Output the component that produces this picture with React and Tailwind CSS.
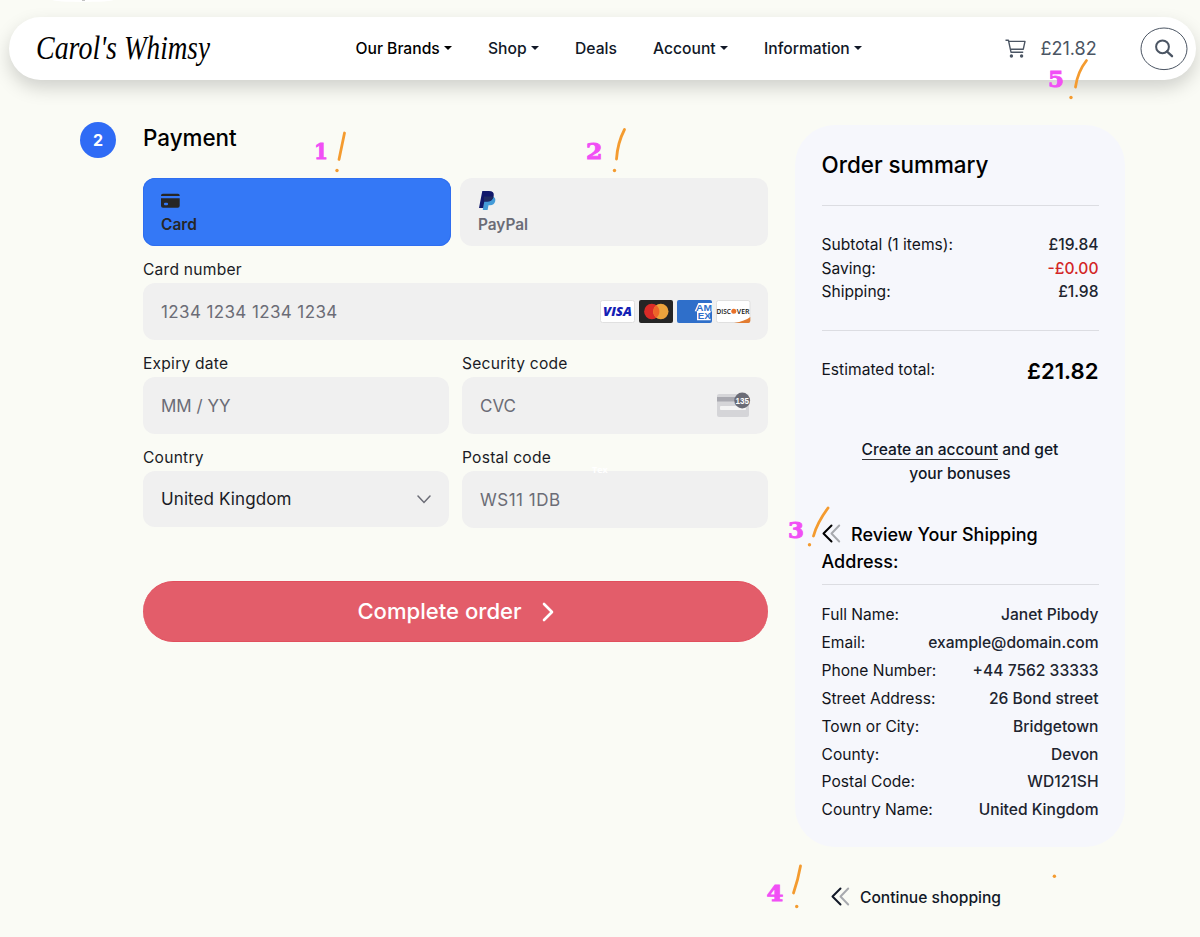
import React from "react";

const NAV = [
  { label: "Our Brands", caret: true, cls: "w-[132.5px] text-black" },
  { label: "Shop", caret: true, cls: "w-[87px] text-[#111827]" },
  { label: "Deals", caret: false, cls: "w-[78px] text-[#111827]" },
  { label: "Account", caret: true, cls: "w-[111px] text-[#111827]" },
  { label: "Information", caret: true, cls: "w-[110px] text-[#111827]" },
];

const TOTALS = [
  ["Subtotal (1 items):", "£19.84", "text-[#20242f]"],
  ["Saving:", "-£0.00", "text-[#d32626]"],
  ["Shipping:", "£1.98", "text-[#20242f]"],
];

const ADDRESS = [
  ["Full Name:", "Janet Pibody"],
  ["Email:", "example@domain.com"],
  ["Phone Number:", "+44 7562 33333"],
  ["Street Address:", "26 Bond street"],
  ["Town or City:", "Bridgetown"],
  ["County:", "Devon"],
  ["Postal Code:", "WD121SH"],
  ["Country Name:", "United Kingdom"],
];

function Header() {
  return (
    <header className="ml-[9px] mt-[17px] flex h-[63px] w-[1187px] items-center rounded-[32px] bg-white shadow-[0_8px_18px_rgba(0,0,0,0.17)]">
      <div className="ml-[27px] w-[319.5px]">
        <svg width="178" height="48" viewBox="0 0 178 48" className="block overflow-visible">
          <g className="fill-black font-['Liberation_Serif',serif] text-[34px] italic">
            <text x="0" y="34" textLength="81" lengthAdjust="spacingAndGlyphs">Carol's</text>
            <text x="88" y="34" textLength="86" lengthAdjust="spacingAndGlyphs">Whimsy</text>
          </g>
        </svg>
      </div>
      <nav className="flex w-[649px] items-center text-[15.65px] font-medium">
        {NAV.map((n) => (
          <a key={n.label} className={"flex shrink-0 items-center whitespace-nowrap " + n.cls}>
            {n.label}
            {n.caret && <span className="ml-1 mt-[-1px] border-x-[4.5px] border-t-[4.5px] border-x-transparent border-t-current" />}
          </a>
        ))}
      </nav>
      <svg width="21" height="20" viewBox="0 0 21 20" fill="none" className="shrink-0 stroke-[#4b5563]" strokeWidth="1.4">
        <path d="M.5 1.2H3.4L6 13.2H18.2M3.8 2.4H20L18.3 10.2H5.5" strokeLinejoin="round" />
        <circle cx="6.4" cy="17" r="1" className="fill-[#4b5563]" />
        <circle cx="16.6" cy="17" r="1" className="fill-[#4b5563]" />
      </svg>
      <span className="ml-[15px] w-[99px] shrink-0 text-[18px] text-[#4b5563]">£21.82</span>
      <svg width="48" height="44" viewBox="0 0 48 44" fill="none" className="shrink-0 stroke-[#4b5563]">
        <ellipse cx="24" cy="21.8" rx="23" ry="20.8" strokeWidth="1" />
        <circle cx="22.5" cy="19.8" r="6.4" strokeWidth="2" />
        <path d="M27 24.5L32 29.2" strokeWidth="2.4" strokeLinecap="round" />
      </svg>
    </header>
  );
}

function CardLogos() {
  return (
    <svg width="151" height="24" viewBox="0 0 151 24" className="relative left-px block">
      <rect x=".5" y=".5" width="34" height="22" rx="2" fill="#fff" stroke="#e0e0e0" />
      <text x="3" y="16.3" textLength="29" lengthAdjust="spacingAndGlyphs" className="fill-[#1420b4] font-['Open_Sans',sans-serif] text-[12.5px] font-extrabold italic">VISA</text>
      <rect x="39" width="34" height="23" rx="2" fill="#252525" />
      <circle cx="51.8" cy="11.5" r="7.7" fill="#d92b27" />
      <circle cx="60.8" cy="11.5" r="7.7" fill="#eba33c" />
      <path d="M56.3 5.3a7.7 7.7 0 0 1 0 12.4a7.7 7.7 0 0 1 0-12.4Z" fill="#ee6528" />
      <svg x="77" width="35" height="23" viewBox="0 0 35 23">
        <rect width="35" height="23" rx="2" fill="#2f6fca" />
        <path d="M21.3 3H35V11.2H17.7Z" fill="#fff" />
        <path d="M20 11H33.8L32.5 15.6L33.8 20.2H20Z" fill="#fff" />
        <g className="fill-[#2f6fca] font-['Liberation_Sans',sans-serif] text-[9px] font-bold">
          <text x="19" y="10.7" textLength="16" lengthAdjust="spacingAndGlyphs">AM</text>
          <text x="20.7" y="19.3" textLength="13" lengthAdjust="spacingAndGlyphs">EX</text>
        </g>
      </svg>
      <rect x="116.5" y=".5" width="33.5" height="22" rx="2" fill="#fff" stroke="#e0e0e0" />
      <path d="M134 23Q145 21 150.3 17V21a2 2 0 0 1-2 2Z" fill="#e27c31" />
      <text x="116.5" y="13.6" textLength="14.5" lengthAdjust="spacingAndGlyphs" className="fill-[#111] font-['Open_Sans',sans-serif] text-[6.5px] font-semibold">DISC</text>
      <circle cx="133.8" cy="11.2" r="2.5" fill="#e8712a" />
      <text x="136.8" y="13.6" textLength="12.8" lengthAdjust="spacingAndGlyphs" className="fill-[#111] font-['Open_Sans',sans-serif] text-[6.5px] font-semibold">VER</text>
    </svg>
  );
}

function Field({ label, children, className = "", box = "" }) {
  return (
    <div className={"flex flex-col " + className}>
      <span className="h-[24px] pt-px text-[15.6px] leading-5 tracking-[0.23px] text-[#1a1b25]">{label}</span>
      <div className={"flex items-center justify-between rounded-[12px] bg-[#f0f0f0] px-[18px] text-[17px] text-[#6b6c76] " + (box || "h-[57px]")}>{children}</div>
    </div>
  );
}

function Payment() {
  return (
    <section className="flex w-[625px] flex-col">
      <h1 className="h-[56px] text-[22.4px] font-medium leading-8 text-black">Payment</h1>
      <div className="flex justify-between">
        <div className="flex h-[68px] w-[308px] flex-col rounded-[12px] bg-[#3478f6] pl-[18px] pt-[15px] text-[#262626] shadow-[inset_0_0_0_1px_#2f6ef0]">
          <svg width="19" height="16" viewBox="0 0 19 16" fill="#262626">
            <path d="M0 3V2.5Q0 .7 1.8.7H17Q18.7.7 18.7 2.5V3Z" />
            <path fillRule="evenodd" d="M0 5.3H18.7V12.7Q18.7 14.7 16.7 14.7H2Q0 14.7 0 12.7ZM4 9.7Q3 9.7 3 10.7V11.3Q3 12.3 4 12.3H6Q7 12.3 7 11.3V10.7Q7 9.7 6 9.7Z" />
          </svg>
          <span className="mt-[6px] text-[15.5px] font-semibold leading-5">Card</span>
        </div>
        <div className="flex h-[68px] w-[308px] flex-col rounded-[12px] bg-[#f0f0f0] pl-[18px] pt-[13px] text-[#6b6c76]">
          <svg width="18" height="19" viewBox="0 0 18 19" className="ml-px">
            <path d="M5 5.5H13.7Q17 6.5 16.2 10.2Q15.2 14.2 11 14.2H9.5L8.6 19H3.8Z" fill="#449bd8" />
            <path d="M3.3 0H9.8Q15.6 0 14.7 5Q13.6 10.5 8 10.5H5.3L4.1 16.9H0Z" fill="#11186b" />
            <path d="M5 5.5H13Q14.3 5.7 14.6 5.8Q13.2 10.5 8 10.5H5Z" fill="#202b62" />
          </svg>
          <span className="mt-[5px] text-[15.4px] font-semibold leading-5">PayPal</span>
        </div>
      </div>
      <Field label="Card number" className="mt-[13px]">
        <span className="pt-[2px] tracking-[0.38px]">1234 1234 1234 1234</span>
        <CardLogos />
      </Field>
      <div className="mt-[13px] grid grid-cols-2 gap-x-[13px] gap-y-[13px]">
        <Field label="Expiry date"><span className="pt-[2px]">MM / YY</span></Field>
        <Field label="Security code">
          <span className="pt-[2px]">CVC</span>
          <svg width="34" height="27" viewBox="0 0 34 27" className="overflow-visible">
            <rect x="1" y="2" width="32" height="23" rx="2" fill="#d5d5d8" />
            <rect x="1" y="5" width="32" height="4.5" fill="#a9a9b0" />
            <rect x="4" y="14" width="26" height="4" rx="1" fill="#f4f4f4" />
            <circle cx="26.2" cy="8.5" r="7.9" fill="#6b6c76" />
            <text x="19.5" y="12" textLength="13.4" lengthAdjust="spacingAndGlyphs" className="fill-white font-['Liberation_Sans',sans-serif] text-[9.7px] font-bold">135</text>
          </svg>
        </Field>
        <Field label="Country" box="h-[56px]">
          <span className="pt-[2px] tracking-[0.1px] text-[#1a1b25]">United Kingdom</span>
          <svg width="14" height="9" viewBox="0 0 14 9" fill="none" className="mt-px stroke-[#6b6c76]" strokeWidth="1.5"><path d="M1 1L7 7.5L13 1" strokeLinecap="round" /></svg>
        </Field>
        <Field label="Postal code"><span className="pt-[2px] tracking-[0.5px]">WS11 1DB</span></Field>
      </div>
      <button className="mt-[53px] flex h-[61px] items-center justify-center gap-[20px] rounded-[31px] border-y border-[#e14f5d] bg-[#e35d6a] pl-px text-[22.1px] font-medium text-white">
        Complete order
        <svg width="13" height="20" viewBox="0 0 13 20" fill="none" className="stroke-white" strokeWidth="2.6"><path d="M2 2L10 10L2 18" strokeLinecap="round" strokeLinejoin="round" /></svg>
      </button>
    </section>
  );
}

function DoubleChevron({ className = "" }) {
  return (
    <svg width="19" height="19" viewBox="0 0 19 19" fill="none" strokeWidth="2" strokeLinecap="round" strokeLinejoin="round" className={className}>
      <path d="M17.2 1.5L9.5 9.5L17.2 17.5" stroke="#a7a9ae" />
      <path d="M9.5 1.5L1.5 9.5L9.5 17.5" stroke="currentColor" />
    </svg>
  );
}

function Summary() {
  return (
    <aside className="flex w-[330px] flex-col">
      <div className="flex h-[722px] flex-col rounded-[40px] bg-[#f6f7fc] px-[26.5px] pt-[25px] text-[15.6px] text-[#12141a]">
        <h2 className="h-[55px] text-[22.4px] font-medium leading-[30px] text-black">Order summary</h2>
        <hr className="border-[#dcdde2]" />
        <div className="flex h-[124px] flex-col pt-[27px]">
          {TOTALS.map(([a, b, c]) => (
            <div key={a} className="flex justify-between leading-[23.7px]">
              <span>{a}</span>
              <span className={"font-medium " + c}>{b}</span>
            </div>
          ))}
        </div>
        <hr className="border-[#dcdde2]" />
        <div className="flex h-[107px] items-start justify-between pt-[24px]">
          <span className="leading-[30px]">Estimated total:</span>
          <strong className="text-[22.1px] font-semibold leading-[32px] text-black">£21.82</strong>
        </div>
        <p className="text-center font-medium leading-6 text-[#111827]">
          <a className="border-b border-[#333]">Create an account</a> and get<br />your bonuses
        </p>
        <h3 className="mt-[34.5px] h-[63px] text-[18px] font-medium leading-[27px] text-black">
          <DoubleChevron className="mr-[10.5px] inline-block align-[-2px]" />Review Your Shipping Address:
        </h3>
        <hr className="border-[#dcdde2]" />
        <div className="flex flex-col pt-[16.5px]">
          {ADDRESS.map(([a, b]) => (
            <div key={a} className="flex justify-between leading-[27.9px]">
              <span>{a}</span>
              <span className="font-medium text-[#20242f]">{b}</span>
            </div>
          ))}
        </div>
      </div>
      <a className="ml-[36px] mt-[39px] flex items-center gap-[10px] text-[15.6px] font-medium leading-6 text-[#111827]">
        <DoubleChevron className="mb-[4px]" />
        Continue shopping
      </a>
    </aside>
  );
}

function Annotations() {
  return (
    <svg width="1200" height="937" viewBox="0 0 1200 937" className="pointer-events-none absolute left-0 top-0" fill="none">
      <g className="fill-[#f14ff5] stroke-[#f14ff5] font-['DejaVu_Serif',serif] text-[23px] font-bold" strokeWidth="0.9">
        <text x="314" y="158.5" textLength="14" lengthAdjust="spacingAndGlyphs">1</text>
        <text x="586" y="158.8" textLength="16.5" lengthAdjust="spacingAndGlyphs">2</text>
        <text x="788" y="538" textLength="16" lengthAdjust="spacingAndGlyphs">3</text>
        <text x="766.5" y="901" textLength="17" lengthAdjust="spacingAndGlyphs">4</text>
        <text x="1048" y="87" textLength="16" lengthAdjust="spacingAndGlyphs">5</text>
      </g>
      <g stroke="#f49b2f" strokeWidth="2.8" strokeLinecap="round">
        <path d="M344.5 133L339 159.5" />
        <path d="M624.5 129.5Q617.5 143 616.5 159" />
        <path d="M828 508Q817 523 813.5 536" />
        <path d="M800.5 866Q798 880 793.5 893" />
        <path d="M1086.5 60.5Q1077.5 72 1075.5 87" />
      </g>
      <g fill="#f49b2f">
        <circle cx="337" cy="170.5" r="1.7" />
        <circle cx="614.5" cy="170.5" r="1.7" />
        <circle cx="809.5" cy="544.8" r="1.7" />
        <circle cx="796.7" cy="906.5" r="1.7" />
        <circle cx="1071" cy="97.5" r="1.7" />
        <circle cx="1054.4" cy="876.2" r="1.7" />
      </g>
      <text x="592" y="473" className="fill-white font-['Open_Sans',sans-serif] text-[9px] font-bold">Tex</text>
      <ellipse cx="83" cy="0" rx="30" ry="2" fill="#fff" />
      <path d="M82 0h3" stroke="#888" />
    </svg>
  );
}

export default function App() {
  return (
    <div className="relative flex h-[937px] w-[1200px] flex-col overflow-hidden bg-[#fafbf5] font-['Inter',sans-serif]">
      <Header />
      <main className="flex items-start pl-[80px] pt-[42px]">
        <div className="flex h-[36px] w-[36px] items-center justify-center rounded-full bg-[#2f6bf5] text-[16px] font-bold text-white">2</div>
        <div className="ml-[27px]"><Payment /></div>
        <div className="ml-[27px] mt-[3px]"><Summary /></div>
      </main>
      <Annotations />
    </div>
  );
}
